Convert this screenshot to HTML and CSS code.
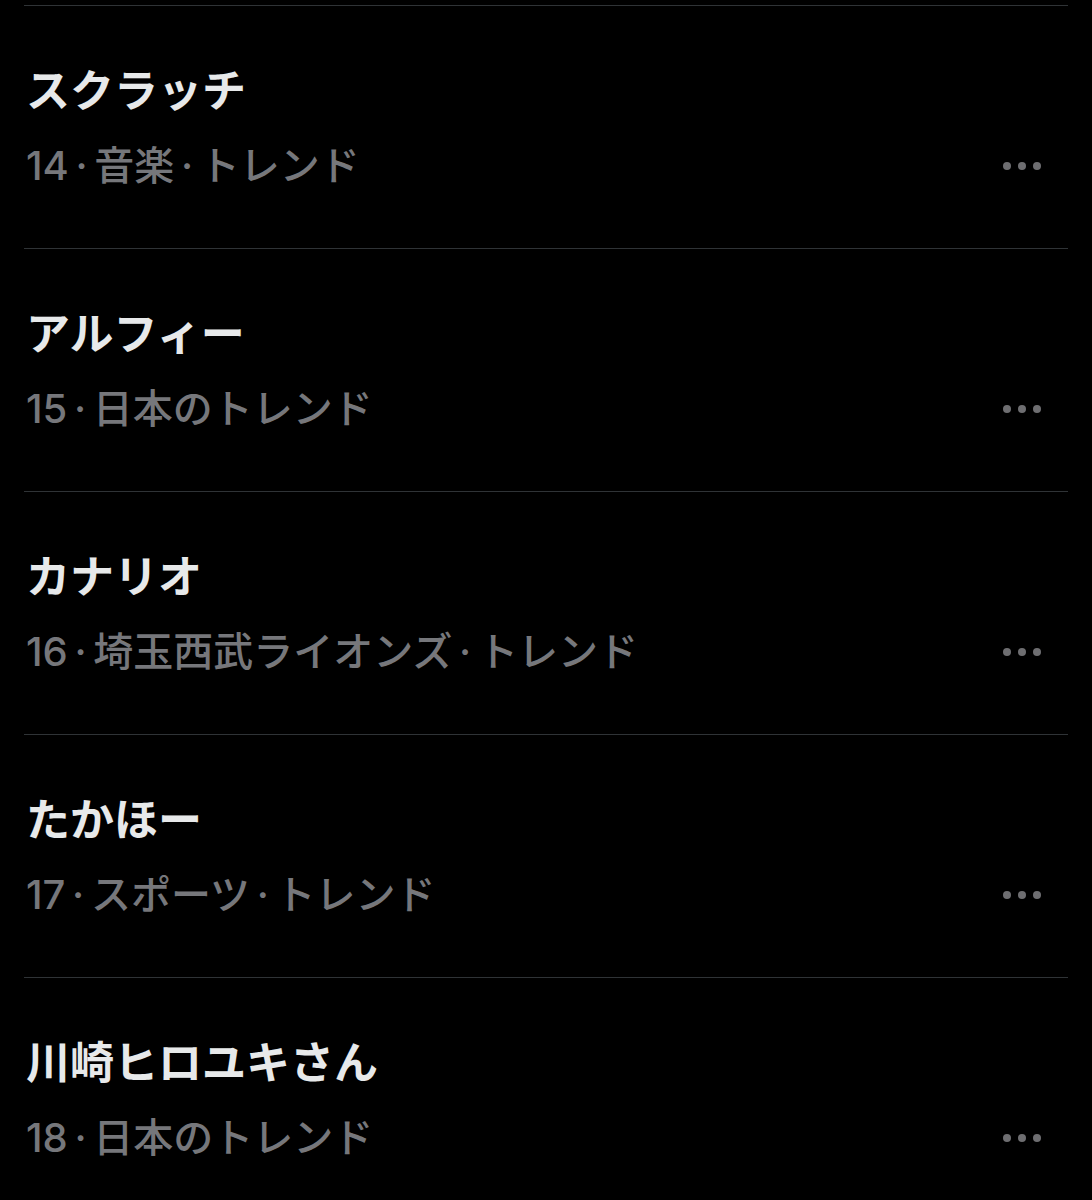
FILE: index.html
```html
<!DOCTYPE html>
<html lang="ja">
<head>
    <meta charset="utf-8">
    <title>トレンド</title>
    <link rel="stylesheet" href="styles.css">
</head>
<body>
    <div class="trend-list">
        <div class="trend">
            <div class="trend-title">スクラッチ</div>
            <div class="trend-meta">
                <span>14 · 音楽 · トレンド</span>
                <span class="more"><i></i><i></i><i></i></span>
            </div>
        </div>
        <div class="trend">
            <div class="trend-title">アルフィー</div>
            <div class="trend-meta">
                <span>15 · 日本のトレンド</span>
                <span class="more"><i></i><i></i><i></i></span>
            </div>
        </div>
        <div class="trend">
            <div class="trend-title">カナリオ</div>
            <div class="trend-meta">
                <span>16 · 埼玉西武ライオンズ · トレンド</span>
                <span class="more"><i></i><i></i><i></i></span>
            </div>
        </div>
        <div class="trend">
            <div class="trend-title">たかほー</div>
            <div class="trend-meta">
                <span>17 · スポーツ · トレンド</span>
                <span class="more"><i></i><i></i><i></i></span>
            </div>
        </div>
        <div class="trend">
            <div class="trend-title">川崎ヒロユキさん</div>
            <div class="trend-meta">
                <span>18 · 日本のトレンド</span>
                <span class="more"><i></i><i></i><i></i></span>
            </div>
        </div>
    </div>
</body>
</html>
```

FILE: styles.css
```css
body {
    margin: 0;
    padding: 0;
    background: #000;
    font-family: Inter, "Noto Sans CJK JP", sans-serif;
}

.trend-list {
    padding: 5px 24px 0;
}

.trend {
    border-top: 1px solid #2f3336;
    padding: 57px 27px 57px 2px;
}

.trend-title {
    color: #e7e9ea;
    font-size: 44px;
    font-weight: 700;
    line-height: 56px;
}

.trend-meta {
    margin-top: 22px;
    display: flex;
    justify-content: space-between;
    align-items: center;
    color: #76777b;
    font-size: 40px;
    font-weight: 500;
    line-height: 50px;
    word-spacing: -4px;
}

.more {
    display: flex;
    gap: 7px;
}

.more i {
    width: 8px;
    height: 8px;
    border-radius: 50%;
    background: #6e6e71;
}
```
